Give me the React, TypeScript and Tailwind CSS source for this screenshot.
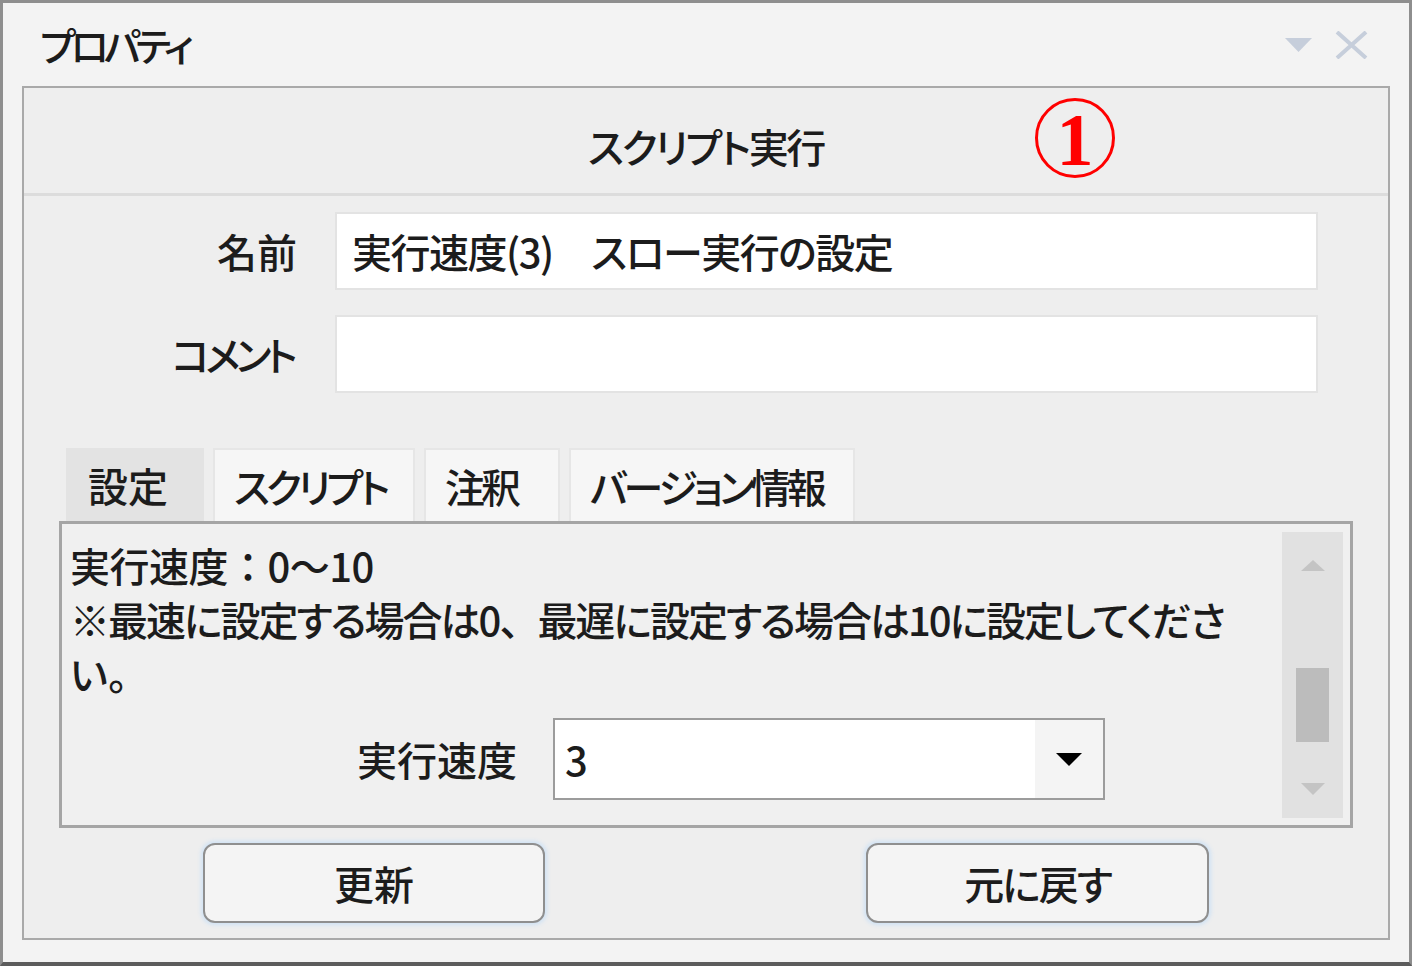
export default function App() {
  const tabs = [
    { label: "設定", w: "w-[138px]", active: true },
    { label: "スクリプト", w: "w-[202px]", active: false },
    { label: "注釈", w: "w-[136px]", active: false },
    { label: "バージョン情報", w: "w-[286px]", active: false },
  ];

  return (
    <div className="w-[1412px] h-[966px] flex flex-col overflow-hidden bg-[#f3f3f3] border-[3px] border-b-[4px] border-[#8e8e8e] border-b-[#5c5c5c] text-[#1c1c1c] font-medium font-['Noto_Sans_CJK_JP',sans-serif] [font-feature-settings:'palt']">
      {/* title bar */}
      <div className="h-[83px] flex items-center pl-[37px] pr-[41px]">
        <span className="text-[39px] leading-none tracking-[-5px]">プロパティ</span>
        <div className="ml-auto flex items-center gap-[23px]">
          <svg width="27" height="14" viewBox="0 0 27 14">
            <path d="M0 0 H27 L13.5 14 Z" fill="#c6cedb" />
          </svg>
          <svg width="33" height="28" viewBox="0 0 33 28">
            <path d="M2 1 L31 27 M31 1 L2 27" stroke="#c6cedb" strokeWidth="4" />
          </svg>
        </div>
      </div>

      {/* panel */}
      <div className="mx-[19px] flex flex-col border-2 border-[#a9a9a9] bg-[#eeeeee]">
        <div className="relative h-[108px] border-b-[3px] border-[#dcdcdc] flex items-center justify-center pt-[10px]">
          <span className="text-[40px] leading-none tracking-[-2.3px]">スクリプト実行</span>
          <div className="absolute left-[1011px] top-[10px] w-[80px] h-[80px] rounded-full border-[3px] border-[#ff0000] flex items-center justify-center">
            <span className="text-[#ff0000] text-[74px] leading-none font-bold font-['Liberation_Serif',serif] mt-[4px]">1</span>
          </div>
        </div>

        {/* name / comment */}
        <div className="flex items-center mt-[16px]">
          <div className="w-[273px] text-right text-[40px] leading-none">名前</div>
          <div className="ml-[38px] w-[983px] h-[78px] bg-white border-2 border-[#e3e3e3] px-[15px] flex items-center text-[40px] leading-none whitespace-nowrap tracking-[-1.5px]">
            実行速度(3)　スロー実行の設定
          </div>
        </div>
        <div className="flex items-center mt-[25px]">
          <div className="w-[273px] text-right text-[40px] leading-none tracking-[-4.5px] pr-[4px]">コメント</div>
          <div className="ml-[38px] w-[983px] h-[78px] bg-white border-2 border-[#e3e3e3]" />
        </div>

        {/* tabs */}
        <div className="flex ml-[42px] mt-[55px] gap-[9px]">
          {tabs.map((t) => (
            <div
              key={t.label}
              className={
                t.active
                  ? `${t.w} h-[73px] flex items-center pl-[22px] bg-[#e3e3e3] text-[40px] leading-none`
                  : `${t.w} h-[73px] flex items-center pl-[19px] bg-[#f6f6f6] border-2 border-b-0 border-[#e6e6e6] text-[40px] leading-none tracking-[-4px]`
              }
            >
              {t.label}
            </div>
          ))}
        </div>

        {/* tab content */}
        <div className="mx-[35px] h-[307px] flex border-[3px] border-[#a5a5a5] bg-[#f0f0f0]">
          <div className="flex-1 flex flex-col pl-[8px] pt-[14px]">
            <div className="text-[40px] leading-[54px] whitespace-nowrap">
              <div className="[font-feature-settings:normal] tracking-[-0.5px]">実行速度：0〜10</div>
              <div className="tracking-[-2px]">
                ※最速に設定する場合は0<span className="[font-feature-settings:normal]">、</span>最遅に設定する場合は10に設定してくださ
              </div>
              <div>い。</div>
            </div>
            <div className="flex items-center mt-[18px]">
              <div className="w-[447px] text-right text-[40px] leading-none">実行速度</div>
              <div className="ml-[36px] w-[552px] h-[82px] flex bg-white border-2 border-[#9c9c9c]">
                <div className="flex-1 flex items-center pl-[10px] text-[40px] leading-none">3</div>
                <div className="w-[68px] bg-[#f4f4f4] flex items-center justify-center">
                  <svg width="26" height="13" viewBox="0 0 26 13">
                    <path d="M0 0 H26 L13 13 Z" fill="#000" />
                  </svg>
                </div>
              </div>
            </div>
          </div>
          <div className="w-[61px] mt-[8px] mr-[7px] mb-[7px] bg-[#e1e1e1] flex flex-col items-center pt-[28px] pb-[23px]">
            <svg width="24" height="11" viewBox="0 0 24 11">
              <path d="M12 0 L24 11 H0 Z" fill="#c4c4c4" />
            </svg>
            <div className="mt-[97px] w-[33px] h-[74px] bg-[#bcbcbc]" />
            <svg className="mt-auto" width="24" height="12" viewBox="0 0 24 12">
              <path d="M0 0 H24 L12 12 Z" fill="#c4c4c4" />
            </svg>
          </div>
        </div>

        {/* buttons */}
        <div className="flex mt-[15px] mb-[15px]">
          <button className="ml-[179px] w-[342px] h-[80px] rounded-[12px] border-2 border-[#8f8f8f] bg-[#f4f4f4] shadow-[0_0_4px_2px_#cfe2f5] text-[40px] leading-none">
            更新
          </button>
          <button className="ml-[321px] w-[343px] h-[80px] rounded-[12px] border-2 border-[#8f8f8f] bg-[#f4f4f4] shadow-[0_0_4px_2px_#cfe2f5] text-[40px] leading-none tracking-[-2px]">
            元に戻す
          </button>
        </div>
      </div>
    </div>
  );
}
